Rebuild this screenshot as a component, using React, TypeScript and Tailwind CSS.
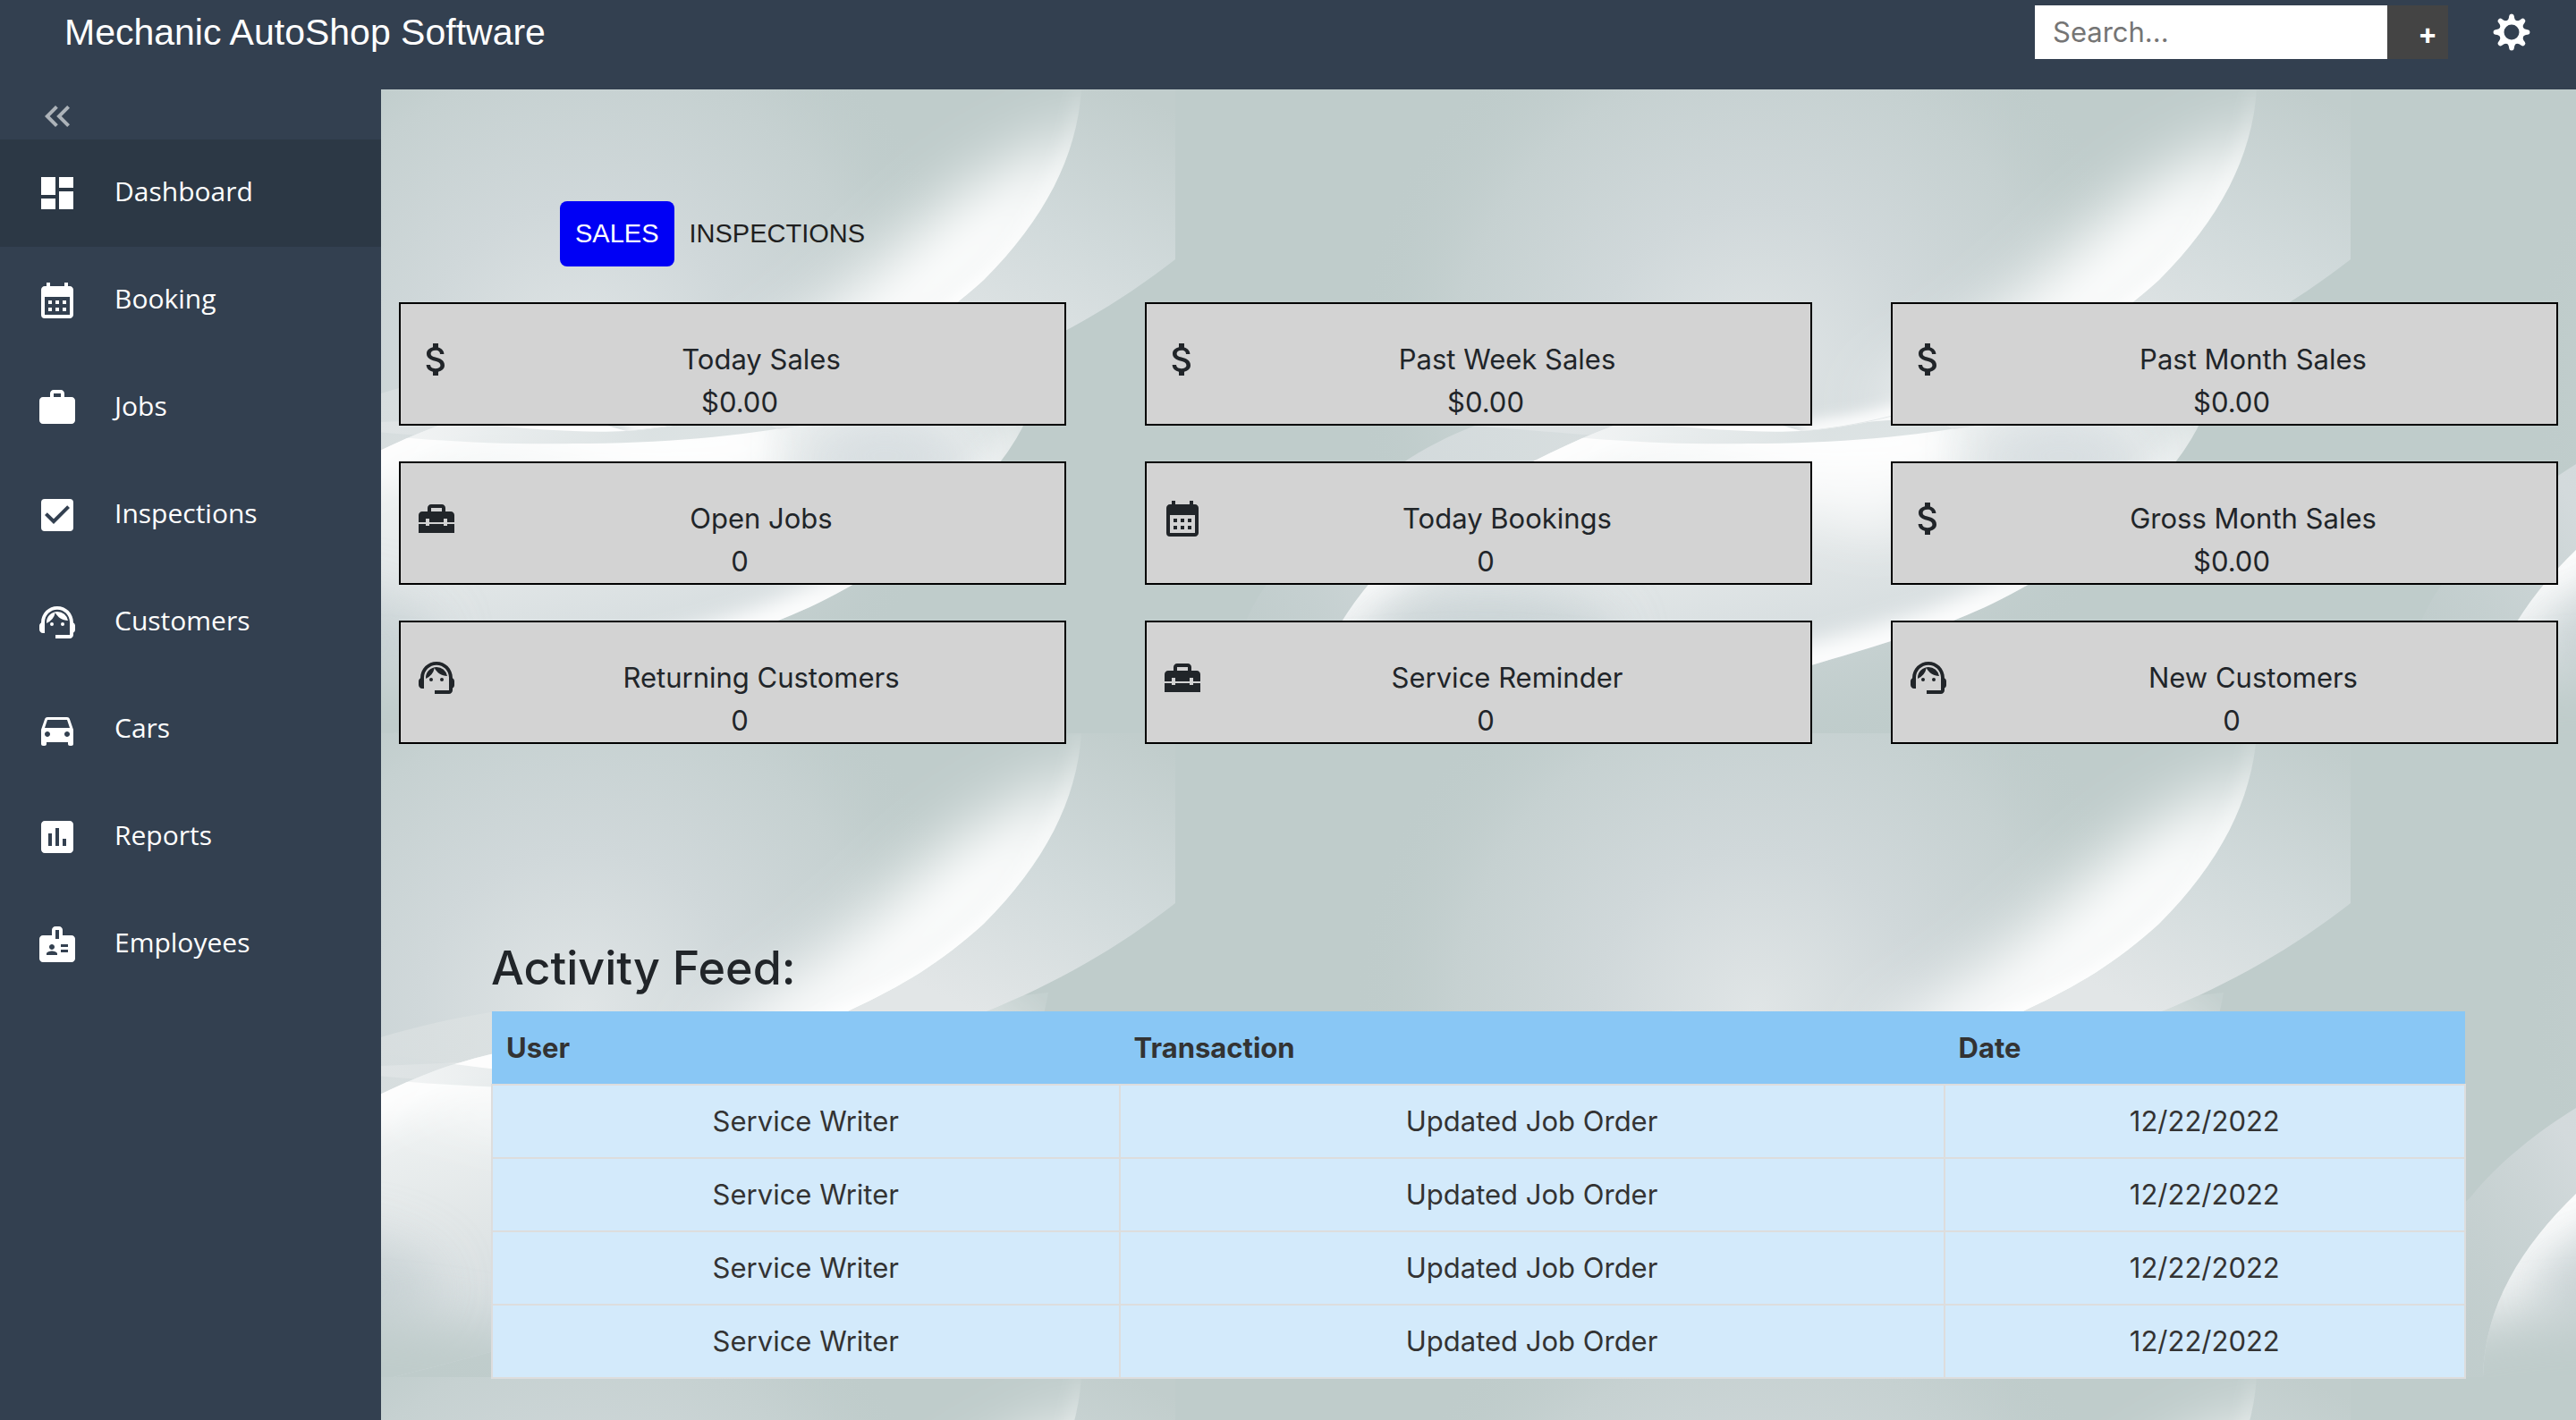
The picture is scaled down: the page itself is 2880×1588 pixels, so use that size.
import React from "react";
import {
  MdAssessment,
  MdAttachMoney,
  MdBadge,
  MdCalendarMonth,
  MdCheckBox,
  MdDashboard,
  MdDirectionsCar,
  MdHomeRepairService,
  MdKeyboardDoubleArrowLeft,
  MdSupportAgent,
  MdWork,
} from "react-icons/md";
import type { IconType } from "react-icons";

type NavItem = { label: string; icon: IconType; active?: boolean };
type Stat = { label: string; value: string; icon: IconType };
type Activity = { user: string; transaction: string; date: string };

const navItems: NavItem[] = [
  { label: "Dashboard", icon: MdDashboard, active: true },
  { label: "Booking", icon: MdCalendarMonth },
  { label: "Jobs", icon: MdWork },
  { label: "Inspections", icon: MdCheckBox },
  { label: "Customers", icon: MdSupportAgent },
  { label: "Cars", icon: MdDirectionsCar },
  { label: "Reports", icon: MdAssessment },
  { label: "Employees", icon: MdBadge },
];

const stats: Stat[] = [
  { label: "Today Sales", value: "$0.00", icon: MdAttachMoney },
  { label: "Past Week Sales", value: "$0.00", icon: MdAttachMoney },
  { label: "Past Month Sales", value: "$0.00", icon: MdAttachMoney },
  { label: "Open Jobs", value: "0", icon: MdHomeRepairService },
  { label: "Today Bookings", value: "0", icon: MdCalendarMonth },
  { label: "Gross Month Sales", value: "$0.00", icon: MdAttachMoney },
  { label: "Returning Customers", value: "0", icon: MdSupportAgent },
  { label: "Service Reminder", value: "0", icon: MdHomeRepairService },
  { label: "New Customers", value: "0", icon: MdSupportAgent },
];

const activities: Activity[] = Array.from({ length: 4 }, () => ({
  user: "Service Writer",
  transaction: "Updated Job Order",
  date: "12/22/2022",
}));

/** Eight-toothed gear with a wide round hole. */
function GearIcon() {
  const angles = [0, 45, 90, 135, 180, 225, 270, 315];
  return (
    <svg viewBox="-21 -21 42 42" className="size-[42px]" aria-hidden="true">
      <circle r="11.2" fill="none" stroke="currentColor" strokeWidth="5.4" />
      {angles.map((a) => (
        <path
          key={a}
          transform={`rotate(${a})`}
          fill="currentColor"
          d="M-6.4 -12 C-4 -13.2 -3 -15 -2.8 -18 Q-2.6 -20.5 0 -20.5 Q2.6 -20.5 2.8 -18 C3 -15 4 -13.2 6.4 -12 Z"
        />
      ))}
    </svg>
  );
}

const UPPER_EDGE =
  "M1209 0 C1204 75 1168 145 1100 213 C1050 258 1010 282 950 310 C890 340 830 359 800 365 C760 375 730 379 700 382";
const BAND_EDGE =
  "M1314 190 C1250 240 1180 280 1101 312 C1020 348 930 371 870 380 C800 393 700 400 600 395 C520 391 440 385 335 376";
const LEAF =
  "M148 720 C150 640 190 575 253 514 C310 465 390 414 490 376 C560 352 650 336 780 332 L1172 290 C1165 330 1155 355 1144 376 C1120 425 1060 490 955 553 C900 585 850 603 800 617 C740 636 690 650 620 670 C560 690 500 705 440 720 Z";
const OUTER_RING =
  "M60 700 C62 660 68 620 80 592 C95 560 110 540 134 519 C165 480 210 445 252 419 C280 400 305 388 335 376 C365 362 395 350 426 340 C465 328 510 318 549 312 C600 303 650 298 720 300 L720 380 C560 350 390 414 253 514 C190 575 150 640 148 720 L60 720";

/** Repeating wallpaper of soft white ribbons behind the dashboard. */
function Wallpaper() {
  return (
    <svg className="absolute inset-0 h-full w-full" aria-hidden="true">
      <defs>
        <pattern id="ribbons" patternUnits="userSpaceOnUse" x="-426" y="0" width="1314" height="720">
          <rect width="1314" height="720" fill="#bfcccb" />
          <rect width="1314" height="720" fill="url(#glow)" />

          <path d={`${OUTER_RING} Z`} fill="url(#ring)" />

          <g clipPath="url(#clipBand)">
            <rect width="1314" height="420" fill="url(#band)" />
          </g>

          <g clipPath="url(#clipUpper)">
            <rect width="1314" height="400" fill="#bfcccb" mask="url(#fadeRight)" />
            <rect width="1314" height="400" fill="url(#glow)" />
            <path
              d="M1225 60 C1205 120 1160 180 1100 227 C1040 280 980 320 880 370 L800 350 C880 300 960 240 1020 180 C1090 110 1180 70 1225 60 Z"
              fill="#ffffff"
              stroke="#ffffff"
              strokeWidth="24"
              filter="url(#soft36)"
            />
            <path d={UPPER_EDGE} fill="none" stroke="url(#edgeFade)" strokeWidth="20" filter="url(#soft8)" />
          </g>

          <g clipPath="url(#clipLower)">
            <path d={LEAF} fill="url(#leaf)" mask="url(#fadeCorner)" />
            <g clipPath="url(#clipLeaf)">
              <path
                d="M140 720 C152 640 190 575 253 514 C310 465 390 414 490 376 C600 345 650 400 760 400 L860 392"
                fill="none"
                stroke="url(#rimFade)"
                strokeWidth="56"
                filter="url(#soft20)"
              />
              <path d="M420 410 C560 380 700 400 880 385 L800 500 L640 460 Z" fill="#ffffff" opacity="0.7" filter="url(#soft30)" />
              <ellipse cx="990" cy="410" rx="90" ry="50" fill="#c9d2d7" opacity="0.5" filter="url(#soft30)" />
              <ellipse cx="350" cy="620" rx="140" ry="60" fill="#c4cfd1" opacity="0.8" filter="url(#soft30)" />
              <path
                d="M1150 376 C1120 425 1060 490 955 553 C900 585 850 603 800 617 C740 636 680 645 600 670"
                fill="none"
                stroke="url(#lowerRim)"
                strokeWidth="44"
                filter="url(#soft12)"
              />
              <ellipse cx="330" cy="735" rx="330" ry="85" fill="#bfcccb" filter="url(#soft30)" />
            </g>
            <path
              d="M335 376 C440 392 560 398 640 396 C740 396 830 388 900 374 C840 362 760 372 700 382 C620 386 500 372 400 352 Z"
              fill="url(#wedge)"
            />
          </g>
        </pattern>

        <radialGradient id="glow" gradientUnits="userSpaceOnUse" cx="650" cy="310" r="450">
          <stop offset="0" stopColor="#e0e5e6" />
          <stop offset="0.4" stopColor="#d0d8da" />
          <stop offset="0.75" stopColor="#c6d1d1" />
          <stop offset="1" stopColor="#bfcccb" stopOpacity="0" />
        </radialGradient>
        <linearGradient id="ring" gradientUnits="userSpaceOnUse" x1="90" y1="640" x2="640" y2="300">
          <stop offset="0" stopColor="#c6d0d1" stopOpacity="0.2" />
          <stop offset="0.35" stopColor="#d3dadc" />
          <stop offset="1" stopColor="#dfe4e4" stopOpacity="0.7" />
        </linearGradient>
        <linearGradient id="band" gradientUnits="userSpaceOnUse" x1="1260" y1="0" x2="1110" y2="320">
          <stop offset="0" stopColor="#c1cdcc" />
          <stop offset="0.5" stopColor="#d1dadb" />
          <stop offset="1" stopColor="#e2e6e7" />
        </linearGradient>
        <linearGradient id="leaf" gradientUnits="userSpaceOnUse" x1="600" y1="380" x2="660" y2="700">
          <stop offset="0" stopColor="#f1f4f4" />
          <stop offset="0.5" stopColor="#e0e5e6" />
          <stop offset="1" stopColor="#cdd6d9" />
        </linearGradient>
        <linearGradient id="edgeFade" gradientUnits="userSpaceOnUse" x1="1209" y1="0" x2="1100" y2="220">
          <stop offset="0" stopColor="#ffffff" stopOpacity="0.1" />
          <stop offset="1" stopColor="#ffffff" />
        </linearGradient>
        <linearGradient id="rimFade" gradientUnits="userSpaceOnUse" x1="0" y1="520" x2="0" y2="700">
          <stop offset="0" stopColor="#ffffff" />
          <stop offset="1" stopColor="#ffffff" stopOpacity="0" />
        </linearGradient>
        <linearGradient id="lowerRim" gradientUnits="userSpaceOnUse" x1="1150" y1="370" x2="900" y2="570">
          <stop offset="0" stopColor="#ffffff" stopOpacity="0.2" />
          <stop offset="1" stopColor="#ffffff" stopOpacity="0.95" />
        </linearGradient>
        <linearGradient id="wedge" gradientUnits="userSpaceOnUse" x1="400" y1="0" x2="900" y2="0">
          <stop offset="0" stopColor="#d6dddf" stopOpacity="0.2" />
          <stop offset="0.65" stopColor="#d3dbdc" stopOpacity="0.8" />
          <stop offset="1" stopColor="#d3dbdc" stopOpacity="0.7" />
        </linearGradient>
        <linearGradient id="rightWhite" gradientUnits="userSpaceOnUse" x1="820" y1="0" x2="980" y2="0">
          <stop offset="0" stopColor="#000000" />
          <stop offset="1" stopColor="#ffffff" />
        </linearGradient>
        <mask id="fadeRight" maskUnits="userSpaceOnUse" x="0" y="0" width="1314" height="400">
          <rect width="1314" height="400" fill="url(#rightWhite)" />
        </mask>
        <linearGradient id="cornerFade" gradientUnits="userSpaceOnUse" x1="1172" y1="300" x2="1080" y2="400">
          <stop offset="0" stopColor="#1c1c1c" />
          <stop offset="1" stopColor="#ffffff" />
        </linearGradient>
        <mask id="fadeCorner" maskUnits="userSpaceOnUse" x="0" y="200" width="1314" height="520">
          <rect y="200" width="1314" height="520" fill="url(#cornerFade)" />
        </mask>

        <clipPath id="clipUpper">
          <path d={`${UPPER_EDGE} L560 360 L600 0 Z`} />
        </clipPath>
        <clipPath id="clipBand">
          <path d={`${BAND_EDGE} L700 360 L1209 0 L1314 0 Z`} />
        </clipPath>
        <clipPath id="clipLower">
          <path d="M0 720 L0 300 L549 340 L700 382 C760 378 800 366 830 358 L870 380 C930 371 1020 348 1101 312 C1180 280 1250 240 1314 190 L1314 720 Z" />
        </clipPath>
        <clipPath id="clipLeaf">
          <path d={LEAF} />
        </clipPath>

        <filter id="soft8" x="-20%" y="-20%" width="140%" height="140%">
          <feGaussianBlur stdDeviation="8" />
        </filter>
        <filter id="soft12" x="-20%" y="-20%" width="140%" height="140%">
          <feGaussianBlur stdDeviation="12" />
        </filter>
        <filter id="soft20" x="-20%" y="-30%" width="140%" height="160%">
          <feGaussianBlur stdDeviation="20" />
        </filter>
        <filter id="soft30" x="-40%" y="-60%" width="180%" height="220%">
          <feGaussianBlur stdDeviation="28" />
        </filter>
        <filter id="soft36" x="-40%" y="-60%" width="180%" height="220%">
          <feGaussianBlur stdDeviation="36" />
        </filter>
      </defs>
      <rect width="100%" height="100%" fill="url(#ribbons)" />
    </svg>
  );
}

function Header() {
  return (
    <header className="flex h-[100px] items-start justify-between bg-[#334050] pr-[51px] pl-[72px] text-white">
      <h1 className="pt-3 font-['Liberation_Sans',Arial,sans-serif] text-[41px] leading-[48px]">
        Mechanic AutoShop Software
      </h1>
      <div className="flex items-center pt-[6px]">
        <form className="flex h-[60px]" onSubmit={(e) => e.preventDefault()}>
          <input
            type="text"
            aria-label="Search"
            placeholder="Search..."
            className="w-[394px] bg-white px-5 text-[31px] text-[#212529] outline-none placeholder:text-[#757575]"
          />
          <button
            type="submit"
            aria-label="Add"
            className="w-[68px] bg-[#444444] pt-1 pl-[22px] text-[32px] leading-[56px] font-bold"
          >
            +
          </button>
        </form>
        <button type="button" aria-label="Settings" className="ml-[50px]">
          <GearIcon />
        </button>
      </div>
    </header>
  );
}

function Sidebar() {
  return (
    <aside className="w-[426px] shrink-0 bg-[#334050] text-white">
      <button
        type="button"
        aria-label="Collapse menu"
        className="flex h-14 w-full items-center px-10 pt-1 text-[#adb3b9]"
      >
        <MdKeyboardDoubleArrowLeft className="size-12" />
      </button>
      <nav>
        <ul>
          {navItems.map(({ label, icon: Icon, active }) => (
            <li key={label}>
              <a
                href="#"
                aria-current={active ? "page" : undefined}
                className={
                  active
                    ? "flex h-[120px] items-center gap-10 bg-[#2c3845] px-10"
                    : "flex h-[120px] items-center gap-10 px-10"
                }
              >
                <Icon className="size-12 shrink-0" />
                <span className="pb-1 font-['Open_Sans','Noto_Sans',sans-serif] text-[30px] leading-[44px]">
                  {label}
                </span>
              </a>
            </li>
          ))}
        </ul>
      </nav>
    </aside>
  );
}

function StatCard({ label, value, icon: Icon }: Stat) {
  return (
    <section className="border-2 border-black bg-[#d3d3d3] pt-[38px] pl-4 text-center text-[31px] leading-[48px] text-[#212529]">
      <div className="flex">
        <Icon className="size-12 shrink-0" />
        <h2 className="flex-1">{label}</h2>
      </div>
      <p>{value}</p>
    </section>
  );
}

function ActivityTable() {
  return (
    <section className="mx-[123px] mt-[218px]">
      <h2 className="mb-4 text-[52px] leading-[65px] font-medium text-[#212529]">Activity Feed:</h2>
      <table className="w-full table-fixed border-collapse text-[31px] leading-[48px] text-[#333333]">
        <colgroup>
          <col className="w-[31.8%]" />
          <col className="w-[41.8%]" />
          <col className="w-[26.4%]" />
        </colgroup>
        <thead>
          <tr className="bg-[#89c7f5] text-left">
            <th scope="col" className="h-[82px] px-4 font-bold">User</th>
            <th scope="col" className="h-[82px] px-4 font-bold">Transaction</th>
            <th scope="col" className="h-[82px] px-4 font-bold">Date</th>
          </tr>
        </thead>
        <tbody>
          {activities.map((row, i) => (
            <tr key={i} className="bg-[#d3eafb] text-center">
              <td className="h-[82px] border-2 border-[#dddddd] px-4">{row.user}</td>
              <td className="h-[82px] border-2 border-[#dddddd] px-4">{row.transaction}</td>
              <td className="h-[82px] border-2 border-[#dddddd] px-4">{row.date}</td>
            </tr>
          ))}
        </tbody>
      </table>
    </section>
  );
}

export default function App() {
  return (
    <div className="flex min-h-screen flex-col bg-[#bfcccb] font-['Inter',sans-serif]">
      <Header />
      <div className="flex flex-1">
        <Sidebar />
        <main className="relative min-w-0 flex-1 pb-10">
          <Wallpaper />
          <div className="relative pt-[125px]">
            <div
              role="tablist"
              className="ml-[200px] flex h-[73px] font-['Liberation_Sans',Arial,sans-serif] text-[29px]"
            >
              <button role="tab" aria-selected="true" type="button" className="rounded-lg bg-[#0000f5] px-[17px] text-white">
                SALES
              </button>
              <button role="tab" aria-selected="false" type="button" className="px-[17px] text-[#1f1f1f]">
                INSPECTIONS
              </button>
            </div>
            <div className="mx-5 mt-10 grid grid-cols-3 gap-x-[88px] gap-y-10">
              {stats.map((s) => (
                <StatCard key={s.label} {...s} />
              ))}
            </div>
            <ActivityTable />
          </div>
        </main>
      </div>
    </div>
  );
}
